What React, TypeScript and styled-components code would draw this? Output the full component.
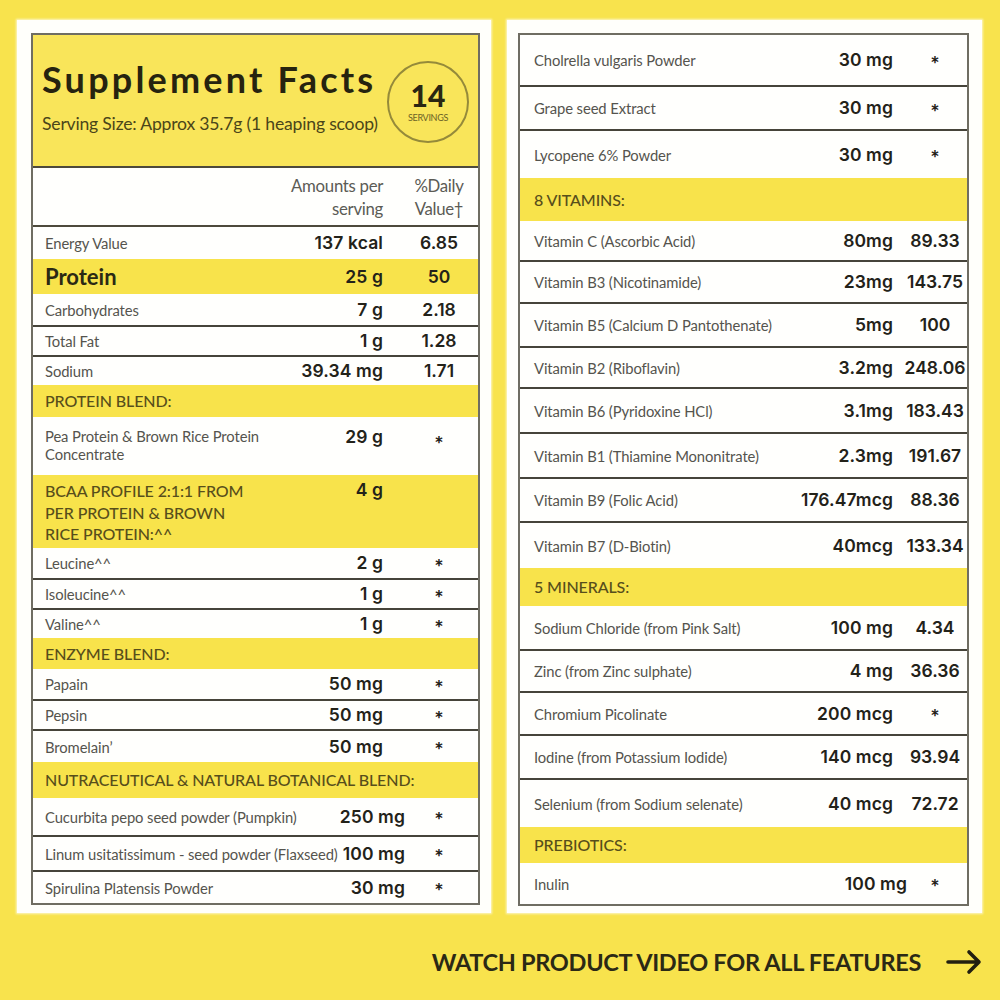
import React from "react";
import styled, { createGlobalStyle } from "styled-components";

const Global = createGlobalStyle`
  html, body { margin: 0; padding: 0; background: #f8e34d; }
  * { box-sizing: border-box; }
`;

type Item = {
  name?: string;
  section?: string;
  amt?: string;
  dv?: string;
  h: number;
  div?: boolean;
  shift?: boolean;
  top?: number;
  big?: boolean;
};

const left: Item[] = [
  { name: "Energy Value", amt: "137 kcal", dv: "6.85", h: 32 },
  { name: "Protein", amt: "25 g", dv: "50", h: 35, big: true },
  { name: "Carbohydrates", amt: "7 g", dv: "2.18", h: 31 },
  { name: "Total Fat", amt: "1 g", dv: "1.28", h: 30, div: true },
  { name: "Sodium", amt: "39.34 mg", dv: "1.71", h: 30, div: true },
  { section: "PROTEIN BLEND:", h: 32 },
  { name: "Pea Protein & Brown Rice Protein\nConcentrate", amt: "29 g", dv: "*", h: 58, top: 10 },
  { section: "BCAA PROFILE 2:1:1 FROM\nPER PROTEIN & BROWN\nRICE PROTEIN:^^", amt: "4 g", h: 73, top: 5 },
  { name: "Leucine^^", amt: "2 g", dv: "*", h: 30 },
  { name: "Isoleucine^^", amt: "1 g", dv: "*", h: 30, div: true },
  { name: "Valine^^", amt: "1 g", dv: "*", h: 30, div: true },
  { section: "ENZYME BLEND:", h: 31 },
  { name: "Papain", amt: "50 mg", dv: "*", h: 30 },
  { name: "Pepsin", amt: "50 mg", dv: "*", h: 30, div: true },
  { name: "Bromelain’", amt: "50 mg", dv: "*", h: 33, div: true },
  { section: "NUTRACEUTICAL & NATURAL BOTANICAL BLEND:", h: 36 },
  { name: "Cucurbita pepo seed powder (Pumpkin)", amt: "250 mg", dv: "*", h: 37, shift: true },
  { name: "Linum usitatissimum - seed powder (Flaxseed)", amt: "100 mg", dv: "*", h: 35, div: true, shift: true },
  { name: "Spirulina Platensis Powder", amt: "30 mg", dv: "*", h: 33, div: true, shift: true },
];

const right: Item[] = [
  { name: "Cholrella vulgaris Powder", amt: "30 mg", dv: "*", h: 50 },
  { name: "Grape seed Extract", amt: "30 mg", dv: "*", h: 44, div: true },
  { name: "Lycopene 6% Powder", amt: "30 mg", dv: "*", h: 49, div: true },
  { section: "8 VITAMINS:", h: 43 },
  { name: "Vitamin C (Ascorbic Acid)", amt: "80mg", dv: "89.33", h: 39 },
  { name: "Vitamin B3 (Nicotinamide)", amt: "23mg", dv: "143.75", h: 42, div: true },
  { name: "Vitamin B5 (Calcium D Pantothenate)", amt: "5mg", dv: "100", h: 44, div: true },
  { name: "Vitamin B2 (Riboflavin)", amt: "3.2mg", dv: "248.06", h: 41, div: true },
  { name: "Vitamin B6 (Pyridoxine HCl)", amt: "3.1mg", dv: "183.43", h: 45, div: true },
  { name: "Vitamin B1 (Thiamine Mononitrate)", amt: "2.3mg", dv: "191.67", h: 45, div: true },
  { name: "Vitamin B9 (Folic Acid)", amt: "176.47mcg", dv: "88.36", h: 44, div: true },
  { name: "Vitamin B7 (D-Biotin)", amt: "40mcg", dv: "133.34", h: 47, div: true },
  { section: "5 MINERALS:", h: 38 },
  { name: "Sodium Chloride (from Pink Salt)", amt: "100 mg", dv: "4.34", h: 43 },
  { name: "Zinc (from Zinc sulphate)", amt: "4 mg", dv: "36.36", h: 42, div: true },
  { name: "Chromium Picolinate", amt: "200 mcg", dv: "*", h: 43, div: true },
  { name: "Iodine (from Potassium Iodide)", amt: "140 mcg", dv: "93.94", h: 44, div: true },
  { name: "Selenium (from Sodium selenate)", amt: "40 mcg", dv: "72.72", h: 49, div: true },
  { section: "PREBIOTICS:", h: 36 },
  { name: "Inulin", amt: "100 mg", dv: "*", h: 41, shift: true },
];

const Page = styled.div`
  width: 1000px;
  height: 1000px;
  padding: 20px 18px 0 17px;
  background: #f8e34d;
  font-family: Lato, "Open Sans", sans-serif;
  display: flex;
  flex-direction: column;
`;

const Cards = styled.div`
  display: grid;
  grid-template-columns: 474px 475px;
  gap: 16px;
`;

const Card = styled.div<{ $side: "l" | "r" }>`
  background: #fffffb;
  height: 893px;
  padding: ${(p) => (p.$side === "l" ? "13px 11px 10px 14px" : "13px 13px 10px 11px")};
  box-shadow: 0 0 2px 1px rgba(255, 255, 250, 0.7);
`;

const Table = styled.div`
  border: 2px solid #6f6d62;
  display: flex;
  flex-direction: column;
  background: #fffffd;
`;

const Header = styled.div`
  height: 133px;
  background: #f9e55a;
  border-bottom: 2px solid #4d4a3c;
  display: flex;
  align-items: center;
  justify-content: space-between;
  padding: 0 9px 0 9px;
`;

const TitleBlock = styled.div`
  display: flex;
  flex-direction: column;
  gap: 15px;
  margin-top: -8px;
`;

const Title = styled.h1`
  margin: 0;
  font-family: Lato, sans-serif;
  font-weight: 700;
  font-size: 36px;
  line-height: 40px;
  letter-spacing: 3.2px;
  color: #26230f;
`;

const Serving = styled.div`
  font-family: Lato, sans-serif;
  font-size: 17.6px;
  line-height: 20px;
  color: #4a4519;
  letter-spacing: -0.2px;
`;

const Badge = styled.div`
  width: 82px;
  height: 82px;
  border-radius: 50%;
  border: 2px solid #958a3a;
  display: flex;
  flex-direction: column;
  align-items: center;
  justify-content: center;
  margin-top: 2px;
  flex-shrink: 0;
`;

const BadgeNum = styled.span`
  font-family: Lato, sans-serif;
  font-weight: 900;
  font-size: 30px;
  line-height: 28px;
  color: #2a2611;
`;

const BadgeLabel = styled.span`
  font-family: Lato, sans-serif;
  font-size: 9px;
  letter-spacing: -0.3px;
  color: #6b6226;
  margin-top: 3px;
`;

const ColHead = styled.div`
  height: 59px;
  border-bottom: 2px solid #4d4a3c;
  display: grid;
  grid-template-columns: 1fr auto 78px;
  align-items: center;
  font-family: Lato, sans-serif;
  font-size: 16.8px;
  line-height: 23px;
  color: #5b5b55;
`;

const ColHeadCell = styled.div<{ $pr: number; $align: "right" | "center" }>`
  text-align: ${(p) => p.$align};
  padding-right: ${(p) => p.$pr}px;
  white-space: pre-line;
  letter-spacing: -0.3px;
`;

const Row = styled.div<{ $h: number; $div?: boolean; $yellow?: boolean; $top?: number; $dv: number }>`
  height: ${(p) => p.$h}px;
  display: grid;
  grid-template-columns: 1fr auto ${(p) => p.$dv}px;
  align-items: ${(p) => (p.$top ? "start" : "center")};
  padding-top: ${(p) => p.$top ?? 0}px;
  background: ${(p) => (p.$yellow ? "#f8e34b" : "transparent")};
  border-top: ${(p) => (p.$div ? "2px solid #46443a" : "none")};
`;

const Name = styled.div<{ $pl: number; $big?: boolean }>`
  padding-left: ${(p) => p.$pl}px;
  font-family: Lato, sans-serif;
  font-size: ${(p) => (p.$big ? "22px" : "14.8px")};
  font-weight: ${(p) => (p.$big ? 700 : 400)};
  color: ${(p) => (p.$big ? "#2b2914" : "#55544e")};
  line-height: 18px;
  white-space: pre-line;
  letter-spacing: ${(p) => (p.$big ? "0" : "-0.1px")};
`;

const Section = styled.div<{ $pl: number }>`
  padding-left: ${(p) => p.$pl}px;
  font-family: Lato, sans-serif;
  font-weight: 500;
  font-size: 16px;
  line-height: 21.5px;
  color: #574e1b;
  white-space: pre;
  letter-spacing: -0.1px;
`;

const Amount = styled.div<{ $mr: number }>`
  font-family: Inter, "Open Sans", sans-serif;
  font-weight: 600;
  font-size: 17.5px;
  line-height: 20px;
  letter-spacing: 0.1px;
  color: #232219;
  text-align: right;
  margin-right: ${(p) => p.$mr}px;
  white-space: nowrap;
`;

const DV = styled.div<{ $star?: boolean }>`
  font-family: ${(p) => (p.$star ? "Lato, sans-serif" : "Inter, 'Open Sans', sans-serif")};
  font-weight: ${(p) => (p.$star ? 900 : 600)};
  font-size: ${(p) => (p.$star ? "21px" : "17.5px")};
  line-height: 20px;
  color: #232219;
  text-align: center;
  padding-top: ${(p) => (p.$star ? 7 : 0)}px;
`;

const Footer = styled.div`
  display: flex;
  justify-content: flex-end;
  align-items: center;
  gap: 25px;
  padding: 35px 0 0 0;
`;

const FooterText = styled.span`
  font-family: Lato, sans-serif;
  font-weight: 700;
  font-size: 23.5px;
  letter-spacing: -0.3px;
  color: #2b2915;
`;

type Cfg = { pl: number; dv: number; mr: number; mrShift: number };

function Rows({ items, cfg }: { items: Item[]; cfg: Cfg }) {
  return (
    <>
      {items.map((it, i) => (
        <Row
          key={i}
          $h={it.h}
          $div={it.div}
          $yellow={!!it.section || it.big}
          $top={it.top}
          $dv={cfg.dv}
        >
          {it.section ? (
            <Section $pl={cfg.pl}>{it.section}</Section>
          ) : (
            <Name $pl={cfg.pl} $big={it.big}>
              {it.name}
            </Name>
          )}
          <Amount $mr={it.shift ? cfg.mrShift : cfg.mr}>{it.amt ?? ""}</Amount>
          <DV $star={it.dv === "*"}>{it.dv ?? ""}</DV>
        </Row>
      ))}
    </>
  );
}

function Arrow() {
  return (
    <svg width="36" height="26" viewBox="0 0 36 26" fill="none">
      <path
        d="M2 13 H33 M23 3 L33 13 L23 23"
        stroke="#221f10"
        strokeWidth="3.6"
        strokeLinecap="round"
        strokeLinejoin="round"
      />
    </svg>
  );
}

export default function App() {
  return (
    <Page>
      <Global />
      <Cards>
        <Card $side="l">
          <Table>
            <Header>
              <TitleBlock>
                <Title>Supplement Facts</Title>
                <Serving>Serving Size: Approx 35.7g (1 heaping scoop)</Serving>
              </TitleBlock>
              <Badge>
                <BadgeNum>14</BadgeNum>
                <BadgeLabel>SERVINGS</BadgeLabel>
              </Badge>
            </Header>
            <ColHead>
              <div />
              <ColHeadCell $pr={17} $align="right">{"Amounts per\nserving"}</ColHeadCell>
              <ColHeadCell $pr={0} $align="center">{"%Daily\nValue†"}</ColHeadCell>
            </ColHead>
            <Rows items={left} cfg={{ pl: 12, dv: 78, mr: 17, mrShift: -5 }} />
          </Table>
        </Card>
        <Card $side="r">
          <Table>
            <Rows items={right} cfg={{ pl: 14, dv: 64, mr: 10, mrShift: -4 }} />
          </Table>
        </Card>
      </Cards>
      <Footer>
        <FooterText>WATCH PRODUCT VIDEO FOR ALL FEATURES</FooterText>
        <Arrow />
      </Footer>
    </Page>
  );
}
